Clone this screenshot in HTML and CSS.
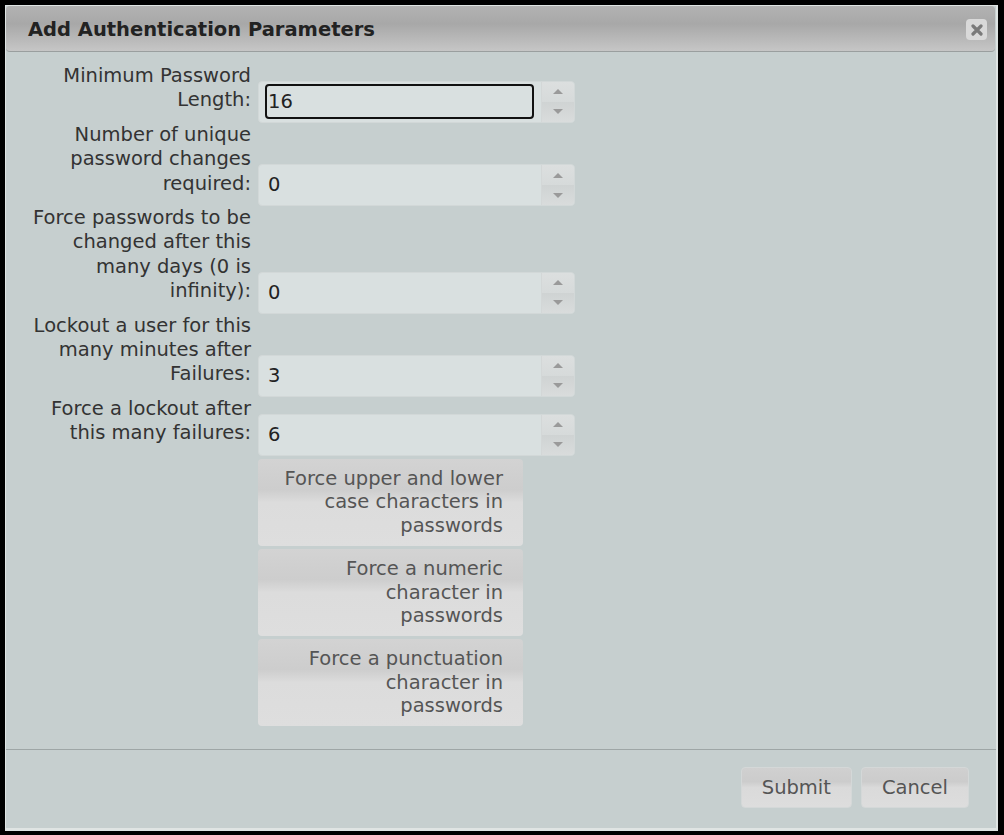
FILE: index.html
```html
<!DOCTYPE html>
<html lang="en">
<head>
    <meta charset="UTF-8">
    <title>Add Authentication Parameters</title>
    <link rel="stylesheet" href="styles.css">
</head>
<body>
    <div class="dialog">
        <div class="titlebar">
            <span class="title">Add Authentication Parameters</span>
            <span class="close-btn">
                <svg width="12" height="12" viewBox="0 0 12 12"><path d="M2 2 L10 10 M10 2 L2 10" stroke="#7a7a7a" stroke-width="3.2" stroke-linecap="round"/></svg>
            </span>
        </div>
        <div class="content">
            <div class="field">
                <label>Minimum Password Length:</label>
                <div class="spinner">
                    <input type="text" value="16" class="focused">
                    <div class="spin-btns"><span class="up"></span><span class="down"></span></div>
                </div>
            </div>
            <div class="field">
                <label>Number of unique password changes required:</label>
                <div class="spinner">
                    <input type="text" value="0">
                    <div class="spin-btns"><span class="up"></span><span class="down"></span></div>
                </div>
            </div>
            <div class="field">
                <label>Force passwords to be changed after this many days (0 is infinity):</label>
                <div class="spinner">
                    <input type="text" value="0">
                    <div class="spin-btns"><span class="up"></span><span class="down"></span></div>
                </div>
            </div>
            <div class="field">
                <label>Lockout a user for this many minutes after Failures:</label>
                <div class="spinner">
                    <input type="text" value="3">
                    <div class="spin-btns"><span class="up"></span><span class="down"></span></div>
                </div>
            </div>
            <div class="field">
                <label>Force a lockout after this many failures:</label>
                <div class="spinner">
                    <input type="text" value="6">
                    <div class="spin-btns"><span class="up"></span><span class="down"></span></div>
                </div>
            </div>
            <div class="toggles">
                <span class="toggle-btn">Force upper and lower case characters in passwords</span>
                <span class="toggle-btn">Force a numeric character in passwords</span>
                <span class="toggle-btn">Force a punctuation character in passwords</span>
            </div>
        </div>
        <div class="footer">
            <button class="btn">Submit</button>
            <button class="btn">Cancel</button>
        </div>
    </div>
</body>
</html>
```

FILE: styles.css
```css
body {
    margin: 0;
    padding: 5px;
    background-color: #000;
    font-family: "DejaVu Sans", Verdana, sans-serif;
    font-size: 19.5px;
}

.dialog {
    width: 990px;
    height: 822px;
    display: flex;
    flex-direction: column;
    background-color: #c6cfcf;
    border: 1px solid #dfe4e3;
    border-right-width: 2px;
    border-bottom-width: 3px;
}

.titlebar {
    height: 45px;
    margin-right: 1px;
    display: flex;
    align-items: center;
    justify-content: space-between;
    padding: 0 8px 0 22px;
    background: linear-gradient(#b2b2b2, #a8a8a8 40%, #c6c6c6);
    border-bottom: 1px solid #9a9f9f;
    border-radius: 4px;
}

.title {
    font-weight: bold;
    color: #222;
    margin-top: 2px;
}

.close-btn {
    width: 21px;
    height: 21px;
    display: flex;
    align-items: center;
    justify-content: center;
    background-color: #d9d9d9;
    border-radius: 4px;
    margin-top: 2px;
}

.content {
    flex: 1;
    padding: 12px 0 0 15px;
    border-bottom: 1px solid #9ea6a6;
}

.field {
    display: flex;
    align-items: flex-end;
}

.field label {
    width: 230px;
    text-align: right;
    line-height: 24.4px;
    color: #333;
    margin: 0 7px 10px 0;
}

.spinner {
    width: 315px;
    height: 40px;
    display: flex;
    background-color: #d9e0e0;
    border: 1px solid #d2d8d8;
    border-radius: 4px;
}

.spinner input {
    flex: 1;
    min-width: 0;
    margin: 2px 7px 3px 6px;
    padding: 0 0 0 1px;
    border: 2px solid transparent;
    border-radius: 4px;
    background: transparent;
    font-family: inherit;
    font-size: 19.5px;
    color: #222;
    outline: none;
}

.spinner input.focused {
    border-color: #111;
}

.spin-btns {
    width: 32px;
    display: flex;
    flex-direction: column;
    border-left: 1px solid #d3d7d7;
    border-radius: 0 4px 4px 0;
    overflow: hidden;
}

.spin-btns span {
    flex: 1;
    display: flex;
    align-items: center;
    justify-content: center;
}

.spin-btns .up {
    background: linear-gradient(#dcdfdf, #d6dada);
}

.spin-btns .down {
    background: linear-gradient(#cfd3d3, #d9dcdc);
}

.spin-btns .up::after,
.spin-btns .down::after {
    content: "";
    border-left: 5px solid transparent;
    border-right: 5px solid transparent;
}

.spin-btns .up::after {
    border-bottom: 5px solid #9a9a9a;
}

.spin-btns .down::after {
    border-top: 5px solid #9a9a9a;
}

.toggles {
    width: 265px;
    margin-left: 237px;
    margin-top: 3px;
    display: flex;
    flex-direction: column;
    gap: 3px;
}

.toggle-btn {
    display: block;
    padding: 8px 20px 8px 23px;
    line-height: 23.7px;
    text-align: right;
    color: #555;
    background: linear-gradient(#d3d3d3, #cdcdcd 35%, #dcdcdc 50%, #dedede);
    border-radius: 4px;
}

.footer {
    height: 61px;
    display: flex;
    justify-content: flex-end;
    align-items: flex-start;
    gap: 9px;
    padding: 17px 27px 0 0;
}

.btn {
    height: 41px;
    padding: 0 20px;
    font-family: inherit;
    font-size: 19.5px;
    color: #555;
    background: linear-gradient(#d0d0d0, #cccccc 35%, #dadada 50%, #dddddd);
    border: 1px solid #d4d8d8;
    border-radius: 4px;
}
```
